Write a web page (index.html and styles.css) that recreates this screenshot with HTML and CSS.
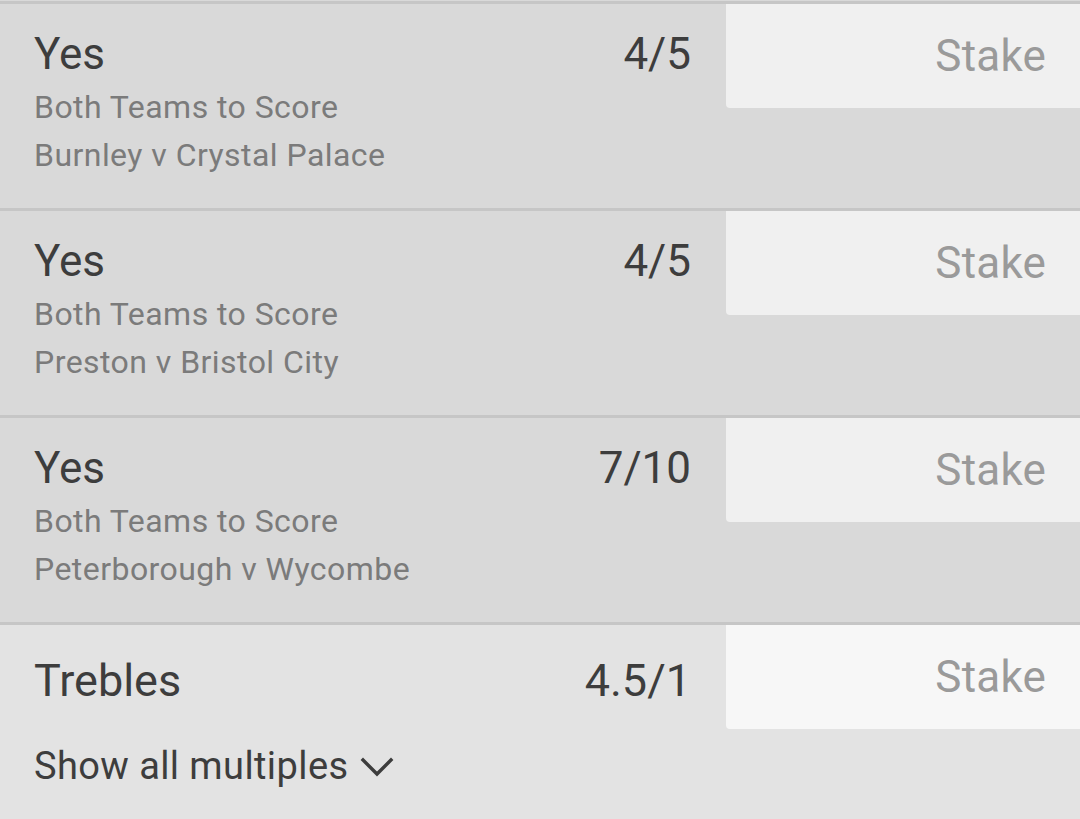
FILE: index.html
```html
<!DOCTYPE html>
<html lang="en">
<head>
<meta charset="utf-8">
<title>Bet slip</title>
<link rel="stylesheet" href="styles.css">
</head>
<body>
<div class="slip">
  <div class="leg">
    <div class="sel">
      <div class="sel-head"><span class="name">Yes</span><span class="odds">4/5</span></div>
      <div class="market">Both Teams to Score</div>
      <div class="event">Burnley v Crystal Palace</div>
    </div>
    <div class="stake">Stake</div>
  </div>
  <div class="leg">
    <div class="sel">
      <div class="sel-head"><span class="name">Yes</span><span class="odds">4/5</span></div>
      <div class="market">Both Teams to Score</div>
      <div class="event">Preston v Bristol City</div>
    </div>
    <div class="stake">Stake</div>
  </div>
  <div class="leg">
    <div class="sel">
      <div class="sel-head"><span class="name">Yes</span><span class="odds">7/10</span></div>
      <div class="market">Both Teams to Score</div>
      <div class="event">Peterborough v Wycombe</div>
    </div>
    <div class="stake">Stake</div>
  </div>
  <div class="multi">
    <div class="multi-row">
      <div class="multi-head"><span class="name">Trebles</span><span class="odds">4.5/1</span></div>
      <div class="stake stake-light">Stake</div>
    </div>
    <div class="show-all">
      <span>Show all multiples</span>
      <svg class="chev" width="34" height="22" viewBox="0 0 34 22" aria-hidden="true">
        <polyline points="3,4 17,18 31,4" fill="none" stroke="#3d3d3d" stroke-width="3.4" stroke-linecap="square"/>
      </svg>
    </div>
  </div>
</div>
</body>
</html>
```
FILE: styles.css
```css
html, body {
  margin: 0;
  padding: 0;
}
body {
  background: #e3e3e3;
  font-family: Roboto, "Noto Sans", "Liberation Sans", sans-serif;
  color: #3d3d3d;
  width: 1080px;
  height: 819px;
  overflow: hidden;
}
.slip {
  padding-top: 1px;
  background: #d9d9d9;
}
.leg {
  display: flex;
  align-items: flex-start;
  height: 204px;
  border-top: 3px solid #c6c6c6;
  background: #d9d9d9;
}
.sel {
  flex: 1;
  padding: 26px 35px 0 34px;
}
.sel-head {
  display: flex;
  justify-content: space-between;
  font-size: 44px;
  line-height: 48px;
  color: #3d3d3d;
}
.market,
.event {
  font-size: 32px;
  line-height: 48px;
  letter-spacing: 0.45px;
  color: #7b7b7b;
}
.market {
  margin-top: 5px;
}
.stake {
  width: 320px;
  height: 104px;
  padding-right: 34px;
  background: #f0f0f0;
  border-bottom-left-radius: 4px;
  text-align: right;
  font-size: 44px;
  letter-spacing: 0.2px;
  line-height: 104px;
  color: #9a9a9a;
}
.stake-light {
  background: #f7f7f7;
}
.multi {
  background: #e3e3e3;
  border-top: 3px solid #c6c6c6;
  height: 195px;
}
.multi-row {
  display: flex;
  align-items: flex-start;
}
.multi-head {
  flex: 1;
  display: flex;
  justify-content: space-between;
  padding: 0 35px 0 34px;
  font-size: 45px;
  line-height: 112px;
  color: #3d3d3d;
}
.show-all {
  display: flex;
  align-items: center;
  gap: 12px;
  padding: 5px 0 0 34px;
  font-size: 38px;
  letter-spacing: 0.4px;
  line-height: 48px;
  color: #3d3d3d;
}
.chev {
  display: block;
  margin-top: 2px;
}
```
